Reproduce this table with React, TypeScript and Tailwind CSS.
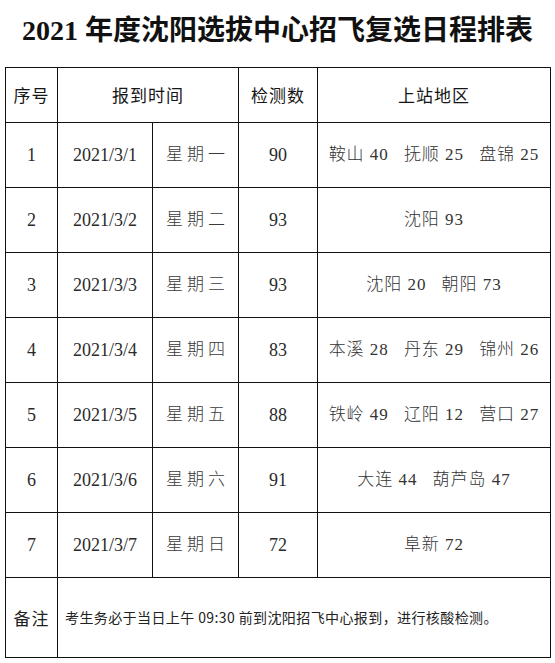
const rows = [
  { no: "1", date: "2021/3/1", day: "星期一", count: "90", sites: ["鞍山 40", "抚顺 25", "盘锦 25"] },
  { no: "2", date: "2021/3/2", day: "星期二", count: "93", sites: ["沈阳 93"] },
  { no: "3", date: "2021/3/3", day: "星期三", count: "93", sites: ["沈阳 20", "朝阳 73"] },
  { no: "4", date: "2021/3/4", day: "星期四", count: "83", sites: ["本溪 28", "丹东 29", "锦州 26"] },
  { no: "5", date: "2021/3/5", day: "星期五", count: "88", sites: ["铁岭 49", "辽阳 12", "营口 27"] },
  { no: "6", date: "2021/3/6", day: "星期六", count: "91", sites: ["大连 44", "葫芦岛 47"] },
  { no: "7", date: "2021/3/7", day: "星期日", count: "72", sites: ["阜新 72"] },
];

const cell = "border border-[#111] text-center align-middle p-0";

export default function App() {
  return (
    <div className="w-[555px] h-[663px] bg-white text-[#1c1c1c] font-['Liberation_Serif','Noto_Sans_CJK_SC',serif]">
      <h1 className="h-[67px] pb-[5px] flex items-center justify-center text-[28px] font-bold text-[#111] leading-none">
        2021 年度沈阳选拔中心招飞复选日程排表
      </h1>

      <table className="ml-[5px] w-[545px] table-fixed border-collapse">
        <colgroup>
          <col className="w-[52px]" />
          <col className="w-[95px]" />
          <col className="w-[86px]" />
          <col className="w-[79px]" />
          <col className="w-[233px]" />
        </colgroup>
        <thead>
          <tr className="h-[55px] text-[17px] tracking-[1px] font-['Noto_Sans_CJK_SC',sans-serif] text-[#161616]">
            <th className={`${cell} font-normal`}>序号</th>
            <th className={`${cell} font-normal`} colSpan={2}>
              报到时间
            </th>
            <th className={`${cell} font-normal`}>检测数</th>
            <th className={`${cell} font-normal`}>上站地区</th>
          </tr>
        </thead>
        <tbody className="text-[18px] text-[#2a2a2a] font-light">
          {rows.map((r) => (
            <tr key={r.no} className="h-[65px]">
              <td className={cell}>{r.no}</td>
              <td className={cell}>{r.date}</td>
              <td className={`${cell} text-[17px] text-[#3a3a3a] tracking-[4px] pl-[4px]`}>{r.day}</td>
              <td className={cell}>{r.count}</td>
              <td className={cell}>
                <div className="flex justify-center gap-[15px] tracking-[1px] text-[17px] text-[#333]">
                  {r.sites.map((s) => (
                    <span key={s}>{s}</span>
                  ))}
                </div>
              </td>
            </tr>
          ))}
          <tr className="h-[80px]">
            <td className={`${cell} text-[17px] tracking-[1px] font-normal font-['Noto_Sans_CJK_SC',sans-serif] text-[#222]`}>
              备注
            </td>
            <td className={`${cell} text-left pl-[7px] text-[14px] tracking-[0.4px] font-normal font-['Noto_Sans_CJK_SC',sans-serif] text-[#222]`} colSpan={4}>
              考生务必于当日上午 09:30 前到沈阳招飞中心报到，进行核酸检测。
            </td>
          </tr>
        </tbody>
      </table>
    </div>
  );
}
